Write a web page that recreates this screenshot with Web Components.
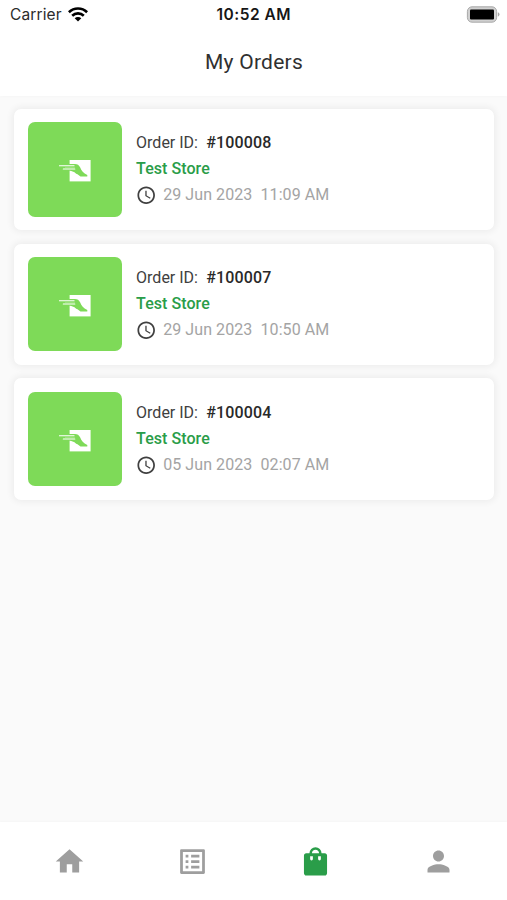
<!DOCTYPE html>
<html lang="en"><head><meta charset="utf-8"><title>My Orders</title>
<style>html,body{margin:0;height:100%;overflow:hidden}body{font-family:Roboto,sans-serif}</style></head>
<body><orders-screen></orders-screen>
<script>
const define = (name, html) => customElements.define(name, class extends HTMLElement {
  constructor() { super(); this.attachShadow({mode: 'open'}).innerHTML = html(this); }
});

define('status-bar', () => `<style>
:host{display:grid;grid-template-columns:1fr auto 1fr;align-items:center;height:29px;padding:0 7px 0 10px;font:400 15.5px Inter,sans-serif;color:#2c2c2c}
.l{display:flex;align-items:center;gap:6.5px;letter-spacing:.12px}.t{font-weight:600;font-size:15.5px;color:#161616;letter-spacing:.5px;margin-right:2.5px}
.r{justify-self:end;display:flex}svg{display:block}
</style><div class="l"><span>Carrier</span><svg width="20" height="15" viewBox="0 0 20 15" fill="none" stroke="#000" stroke-width="2.6"><path d="M.9 5.2a13 13 0 0 1 18.2 0M4.2 8.7a8.3 8.3 0 0 1 11.6 0"/><path d="M10 14.6 6.7 11.3a4.7 4.7 0 0 1 6.6 0Z" fill="#000" stroke="none"/></svg></div>
<span class="t">10:52 AM</span>
<div class="r"><svg width="34" height="17" viewBox="0 0 34 17"><rect x="1.4" y=".8" width="29.2" height="15.4" rx="4.6" fill="#d0d0d0" stroke="#a2a2a2" stroke-width=".9"/><rect x="4" y="3.6" width="24" height="10" rx="1"/><path d="M31.8 6.3q1.7.6 1.7 2.2t-1.7 2.2z" fill="#a6a6a6"/></svg></div>`);

define('app-bar', () => `<style>
:host{display:flex;height:67px;align-items:center;justify-content:center;color:#303030;font-size:21px;letter-spacing:.24px;line-height:28px;padding:0 0 2px 1px;box-sizing:border-box}
</style><slot></slot>`);

define('store-logo', () => `<style>
:host{display:flex;flex:none;width:94.3px;height:94.3px;box-sizing:border-box;padding-top:3.6px;border-radius:7px;background:#7eda58;align-items:center;justify-content:center}
svg{display:block}
</style><svg width="32" height="22" viewBox="0 0 32 22"><path fill="#fff" d="M10.6 0h21v21.4h-21z"/><path fill="#7eda58" d="M9.8 3.9h6.1c2.5 0 4.2 1.1 5.2 3.4 1.4 3.5 3.2 6 7.2 7.6v1.5h-6.8l-3-2.2-1.3-.4-1.7-1.6-3.2-1.2-2.5-.6Z"/><path d="M.3 5.8h14.8M4.3 9h11.5" stroke="#fff" stroke-width="1.1" stroke-linecap="round"/><path d="M6 7.4h10" stroke="#b8eda2" stroke-width=".5"/></svg>`);

define('order-card', e => `<style>
:host{display:flex;height:121.4px;box-sizing:border-box;padding:13.4px 13.6px;gap:13.8px;border-radius:7px;background:#fff;box-shadow:0 0 7px 2px rgba(0,0,0,.055);font-size:16px;color:#404040}
.info{display:grid;grid-template-rows:repeat(3,26px);align-content:start;padding-top:8.2px;line-height:26px;white-space:pre}
b{font-weight:500;color:#292929;letter-spacing:.17px;margin-left:8.2px}
.store{font-weight:500;color:#2a9d49;letter-spacing:.06px}
.date{display:flex;align-items:center;color:#a4a4a4;gap:8px;padding-left:.7px;letter-spacing:.08px}
svg{display:block;flex:none;fill:#404040}
</style><store-logo></store-logo><div class="info"><div>Order ID:<b>#${e.getAttribute('order')}</b></div><div class="store">Test Store</div><div class="date"><svg width="18.4" height="18.4" viewBox="1.5 1.5 21 21"><path d="M11.99 2C6.47 2 2 6.48 2 12s4.47 10 9.99 10C17.52 22 22 17.52 22 12S17.52 2 11.99 2zM12 20c-4.42 0-8-3.58-8-8s3.58-8 8-8 8 3.58 8 8-3.58 8-8 8zm.5-13H11v6l5.25 3.15.75-1.23-4.5-2.67z"/></svg><slot></slot></div></div>`);

const icons = {
  home: '<path d="M10 20v-6h4v6h5v-8h3L12 3 2 12h3v8z"/>',
  list: '<path d="M19 5v14H5V5h14m1.1-2H3.9c-.5 0-.9.4-.9.9v16.2c0 .4.4.9.9.9h16.2c.4 0 .9-.5.9-.9V3.9c0-.5-.5-.9-.9-.9zM11 7h6v2h-6V7zm0 4h6v2h-6v-2zm0 4h6v2h-6zM7 7h2v2H7zm0 4h2v2H7zm0 4h2v2H7z"/>',
  bag: '<path fill-rule="evenodd" d="M18.7 6h-2.3a4.4 4.4 0 0 0-8.8 0H5.3c-1.1 0-1.7.7-1.7 1.7v12.6c0 1.1.7 1.9 1.7 1.9h13.4c1.1 0 1.7-.8 1.7-1.9V7.7c0-1-.6-1.7-1.7-1.7zM12 3.5c1.5 0 2.5 1.1 2.6 2.5H9.4c.1-1.4 1.1-2.5 2.6-2.5zM10.1 10.2a1 1 0 0 1-2 0V8.2h2zm5.8 0a1 1 0 0 1-2 0V8.2h2z"/>',
  person: '<path d="M12 12c2.21 0 4-1.79 4-4s-1.79-4-4-4-4 1.79-4 4 1.79 4 4 4zm0 2c-2.67 0-8 1.34-8 4v2h16v-2c0-2.66-5.33-4-8-4z"/>'
};
define('nav-item', e => `<style>
:host{display:flex;align-items:center;justify-content:center;color:#9e9e9e}:host([active]){color:#2a9d49}
svg{display:block;fill:currentColor}
</style><svg width="33" height="33" viewBox="0 0 24 24">${icons[e.getAttribute('icon')]}</svg>`);

define('bottom-nav', () => `<style>
:host{display:grid;grid-template-columns:repeat(4,1fr);height:78px;box-sizing:border-box;padding:0 7px 0 7.6px;background:#fff;box-shadow:0 0 3px rgba(0,0,0,.04)}
</style><slot></slot>`);

define('orders-screen', () => `<style>
:host{display:flex;flex-direction:column;height:900px;background:#fafafa}
header{background:#fff;box-shadow:0 1px 3px rgba(0,0,0,.02)}
main{flex:1;display:flex;flex-direction:column;gap:13.4px;padding:12.9px 13px 0 14.4px}
</style><header><status-bar></status-bar><app-bar>My Orders</app-bar></header>
<main><order-card order="100008">29 Jun 2023&nbsp; 11:09 AM</order-card><order-card order="100007">29 Jun 2023&nbsp; 10:50 AM</order-card><order-card order="100004">05 Jun 2023&nbsp; 02:07 AM</order-card></main>
<bottom-nav><nav-item icon="home"></nav-item><nav-item icon="list"></nav-item><nav-item icon="bag" active></nav-item><nav-item icon="person"></nav-item></bottom-nav>`);
</script></body></html>
